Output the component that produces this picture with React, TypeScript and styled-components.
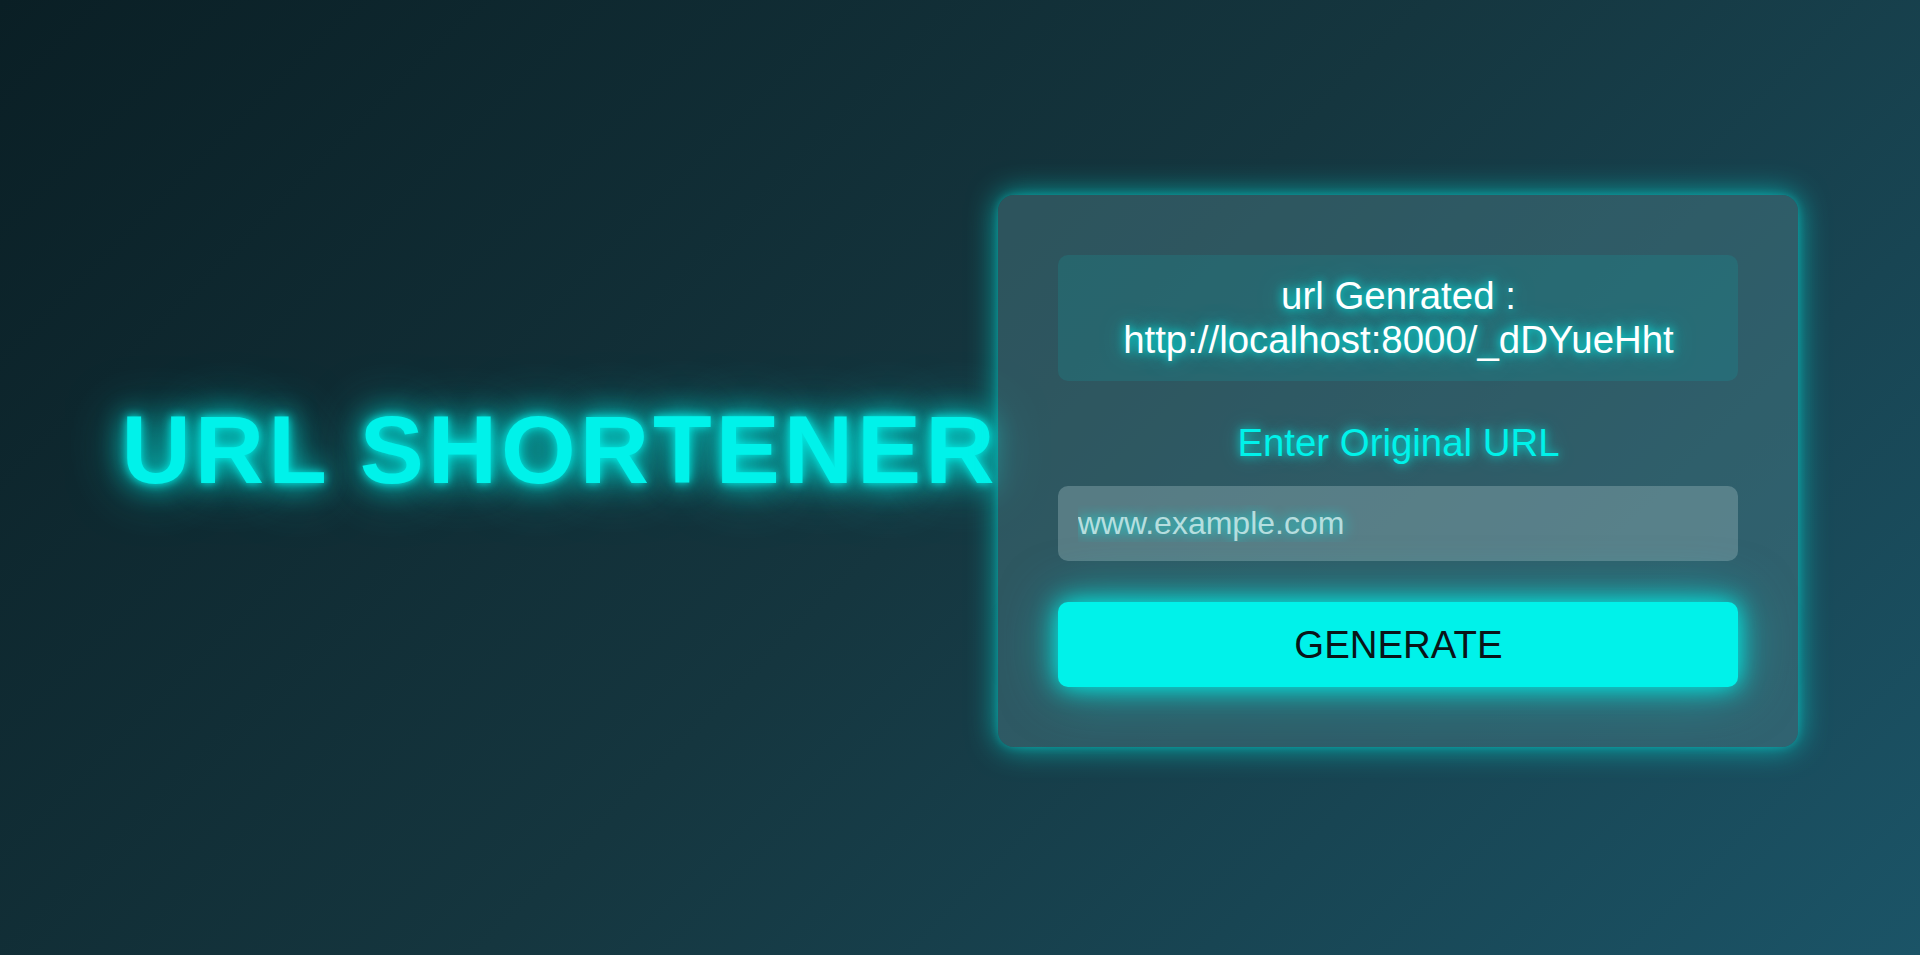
import React from "react";
import styled, { createGlobalStyle } from "styled-components";

const Global = createGlobalStyle`
  html, body {
    margin: 0;
    padding: 0;
  }
  body {
    font-family: "Liberation Sans", Arial, sans-serif;
    background: linear-gradient(135deg, #0a1f25 0%, #15363f 50%, #1b5467 100%);
    min-height: 100vh;
  }
  * { box-sizing: border-box; }
`;

const Page = styled.main`
  min-height: 100vh;
  display: flex;
  align-items: center;
  justify-content: center;
  padding-bottom: 13px;
`;

const Title = styled.h1`
  margin: 0 0 43px 0;
  font-size: 96px;
  font-weight: 700;
  letter-spacing: 4px;
  color: #00f2ea;
  text-shadow: 0 0 10px #00f2ea, 0 0 28px #00f2ea, 0 0 56px rgba(0, 242, 234, 0.7);
  white-space: nowrap;
`;

const Card = styled.section`
  width: 800px;
  padding: 60px;
  border-radius: 16px;
  background: rgba(82, 130, 140, 0.42);
  box-shadow: 0 0 30px rgba(0, 242, 234, 0.65), 0 0 8px rgba(0, 242, 234, 0.3);
  display: flex;
  flex-direction: column;
`;

const Result = styled.div`
  padding: 19.2px;
  border-radius: 10px;
  background: rgba(0, 210, 210, 0.13);
  color: #ffffff;
  font-size: 38.4px;
  text-align: center;
  text-shadow: 0 0 10px #00f2ea, 0 0 22px rgba(0, 242, 234, 0.6);
  margin-bottom: 40px;
`;

const Label = styled.label`
  font-size: 38.4px;
  color: #00f2ea;
  text-align: center;
  text-shadow: 0 0 10px rgba(0, 242, 234, 0.8), 0 0 20px rgba(0, 242, 234, 0.4);
  margin-bottom: 21px;
`;

const Input = styled.input`
  width: 100%;
  border: none;
  outline: none;
  padding: 19.2px;
  border-radius: 10px;
  background: rgba(150, 180, 185, 0.4);
  font-family: "Liberation Sans", Arial, sans-serif;
  font-size: 32px;
  color: #ffffff;
  margin-bottom: 41px;
  &::placeholder {
    color: rgba(205, 235, 235, 0.85);
    text-shadow: 0 0 14px #00f2ea;
  }
`;

const Button = styled.button`
  width: 100%;
  border: none;
  padding: 20.4px;
  border-radius: 10px;
  background: #00f2ea;
  color: #0a1418;
  font-family: "Liberation Sans", Arial, sans-serif;
  font-size: 38.4px;
  box-shadow: 0 0 24px #00f2ea, 0 0 55px rgba(0, 242, 234, 0.5);
  cursor: pointer;
`;

export default function App() {
  return (
    <>
      <Global />
      <Page>
        <Title>URL SHORTENER</Title>
        <Card>
          <Result>
            url Genrated : http://localhost:8000/_dDYueHht
          </Result>
          <Label htmlFor="url">Enter Original URL</Label>
          <Input id="url" placeholder="www.example.com" />
          <Button>GENERATE</Button>
        </Card>
      </Page>
    </>
  );
}
